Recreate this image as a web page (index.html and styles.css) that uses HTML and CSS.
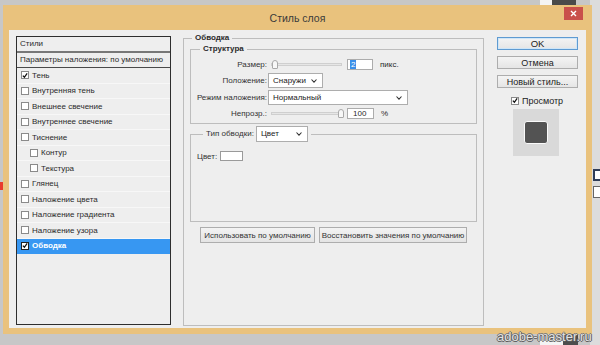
FILE: index.html
```html
<!DOCTYPE html>
<html lang="ru">
<head>
<meta charset="utf-8">
<title>Стиль слоя</title>
<link rel="stylesheet" href="styles.css">
</head>
<body>
<div class="desk">
  <div class="bg-right">
    <span class="bg-ico bg-ico-a"></span>
    <span class="bg-ico bg-ico-b"></span>
  </div>
  <div class="bg-top-white"></div>
  <div class="bg-top-dark"></div>
  <div class="bg-red"></div>
  <div class="bg-bot-white"></div>
  <div class="bg-bot-dark"></div>

  <div class="dialog">
    <div class="titlebar">
      <span class="title">Стиль слоя</span>
      <span class="close"><svg width="7" height="7" viewBox="0 0 7 7"><path d="M1 1L6 6M6 1L1 6" stroke="#fff" stroke-width="1.4"/></svg></span>
    </div>
    <div class="panel">
      <div class="stylelist">
        <div class="sl-head">Стили</div>
        <div class="sl-blend">Параметры наложения: по умолчанию</div>
        <div class="sl-item"><span class="cb"><svg width="7" height="7" viewBox="0 0 7 7"><path d="M1 3.6L2.8 5.6L6 1" fill="none" stroke="#111" stroke-width="1.5"/></svg></span>Тень</div>
        <div class="sl-item"><span class="cb"></span>Внутренняя тень</div>
        <div class="sl-item"><span class="cb"></span>Внешнее свечение</div>
        <div class="sl-item"><span class="cb"></span>Внутреннее свечение</div>
        <div class="sl-item"><span class="cb"></span>Тиснение</div>
        <div class="sl-item sub"><span class="cb"></span>Контур</div>
        <div class="sl-item sub"><span class="cb"></span>Текстура</div>
        <div class="sl-item"><span class="cb"></span>Глянец</div>
        <div class="sl-item"><span class="cb"></span>Наложение цвета</div>
        <div class="sl-item"><span class="cb"></span>Наложение градиента</div>
        <div class="sl-item"><span class="cb"></span>Наложение узора</div>
        <div class="sl-item sel"><span class="cb"><svg width="7" height="7" viewBox="0 0 7 7"><path d="M1 3.6L2.8 5.6L6 1" fill="none" stroke="#111" stroke-width="1.5"/></svg></span>Обводка</div>
      </div>

      <fieldset class="fs-main">
        <legend class="lg-main">Обводка</legend>
        <fieldset class="fs-struct">
          <legend class="lg-struct">Структура</legend>
          <div class="frow r1">
            <span class="flabel">Размер:</span>
            <span class="slider s1"><span class="thumb"></span></span>
            <span class="num n1"><span class="seltext">2</span></span>
            <span class="unit">пикс.</span>
          </div>
          <div class="frow r2">
            <span class="flabel">Положение:</span>
            <span class="dd dd-pos">Снаружи<svg class="chev" width="6" height="4" viewBox="0 0 6 4"><path d="M0.5 0.5L3 3.2L5.5 0.5" fill="none" stroke="#333" stroke-width="1.1"/></svg></span>
          </div>
          <div class="frow r3">
            <span class="flabel">Режим наложения:</span>
            <span class="dd dd-mode">Нормальный<svg class="chev" width="6" height="4" viewBox="0 0 6 4"><path d="M0.5 0.5L3 3.2L5.5 0.5" fill="none" stroke="#333" stroke-width="1.1"/></svg></span>
          </div>
          <div class="frow r4">
            <span class="flabel">Непрозр.:</span>
            <span class="slider s2"><span class="thumb thumb-end"></span></span>
            <span class="num n2">100</span>
            <span class="unit u2">%</span>
          </div>
        </fieldset>

        <fieldset class="fs-type">
          <legend class="lg-type"><span class="lg-type-text">Тип обводки:</span><span class="dd dd-type">Цвет<svg class="chev" width="6" height="4" viewBox="0 0 6 4"><path d="M0.5 0.5L3 3.2L5.5 0.5" fill="none" stroke="#333" stroke-width="1.1"/></svg></span></legend>
          <div class="color-row"><span>Цвет:</span><span class="swatch"></span></div>
        </fieldset>

        <div class="defaults">
          <span class="pbtn pb1">Использовать по умолчанию</span>
          <span class="pbtn pb2">Восстановить значения по умолчанию</span>
        </div>
      </fieldset>

      <div class="side">
        <span class="btn ok">OK</span>
        <span class="btn">Отмена</span>
        <span class="btn">Новый стиль...</span>
        <div class="pv-check"><span class="cb"><svg width="7" height="7" viewBox="0 0 7 7"><path d="M1 3.6L2.8 5.6L6 1" fill="none" stroke="#111" stroke-width="1.5"/></svg></span>Просмотр</div>
        <div class="preview"><div class="pv-square"></div></div>
      </div>
    </div>
  </div>

  <div class="watermark">adobe-master.ru</div>
</div>
</body>
</html>
```

FILE: styles.css
```css
html, body {
  margin: 0;
  padding: 0;
}
body {
  font-family: "Liberation Sans", Arial, sans-serif;
  color: #2a2a2a;
}
.desk {
  position: relative;
  width: 600px;
  height: 345px;
  overflow: hidden;
  background: #c7c7c7;
}

/* desktop bits around the dialog */
.bg-right {
  position: absolute;
  left: 590px;
  top: 0;
  width: 10px;
  height: 345px;
  background: #dcdcdc;
}
.bg-ico {
  position: absolute;
  left: 3px;
  width: 10px;
  height: 12px;
  background: #fff;
  box-sizing: border-box;
}
.bg-ico-a { top: 169px; border: 2px solid #2f3d58; }
.bg-ico-b { top: 186px; border: 1px solid #666; }
.bg-top-white { position: absolute; left: 540px; top: 0; width: 12px; height: 6px; background: #f4f4f4; }
.bg-top-dark { position: absolute; left: 552px; top: 0; width: 24px; height: 6px; background: #4a4a4a; }
.bg-red { position: absolute; left: 0; top: 182px; width: 3px; height: 8px; background: #e83a2e; }
.bg-bot-white { position: absolute; left: 540px; top: 334px; width: 23px; height: 11px; background: #f4f4f4; }
.bg-bot-dark { position: absolute; left: 563px; top: 334px; width: 15px; height: 11px; background: #4d4d4d; }

.watermark {
  position: absolute;
  left: 497px;
  top: 329px;
  font-size: 13px;
  line-height: 15px;
  color: #e2e2e2;
  text-shadow: 1px 0 0 #5a5a5a, -1px 0 0 #6a6a6a, 0 1px 0 #5a5a5a, 0 -1px 0 #7a7a7a;
}

/* dialog window */
.dialog {
  position: absolute;
  left: 3px;
  top: 5px;
  width: 589px;
  height: 329px;
  box-sizing: border-box;
  padding: 0 6px 6px 6px;
  background: #e9c27d;
  display: flex;
  flex-direction: column;
}
.titlebar {
  height: 25px;
  flex: none;
  position: relative;
  display: flex;
  align-items: center;
  justify-content: center;
}
.title {
  font-size: 10.5px;
  color: #3a3a3a;
  margin-top: 1px;
}
.close {
  position: absolute;
  right: 3px;
  top: 2px;
  width: 19px;
  height: 13px;
  background: #c9504b;
  display: flex;
  align-items: center;
  justify-content: center;
}
.close svg { display: block; }

.panel {
  flex: 1;
  display: flex;
  align-items: stretch;
  background: #eeeeee;
  padding: 0 8px 0 7px;
  font-size: 8px;
}

/* styles list */
.stylelist {
  width: 155px;
  flex: none;
  margin: 6px 0 3px 0;
  border: 1px solid #2e2e2e;
  box-sizing: border-box;
  background: #eeeeee;
}
.sl-head {
  height: 14px;
  line-height: 14px;
  padding-left: 3px;
  border-bottom: 2px solid #777;
}
.sl-blend {
  height: 14px;
  line-height: 14px;
  padding-left: 3px;
  border-bottom: 1px solid #4a4a4a;
}
.sl-item {
  height: 15.5px;
  box-sizing: border-box;
  border-bottom: 1px solid #f7f7f7;
  display: flex;
  align-items: center;
  padding-left: 4px;
  gap: 3px;
}
.sl-item.sub { padding-left: 13px; }
.sl-item.sel {
  background: #3797f2;
  color: #fff;
  font-weight: bold;
  border-bottom-color: #3797f2;
}
.cb {
  width: 8px;
  height: 8px;
  flex: none;
  box-sizing: border-box;
  border: 1px solid #8a8a8a;
  background: #fff;
  display: flex;
  align-items: center;
  justify-content: center;
}
.cb svg { display: block; }
.sel .cb { border-color: #222; }

/* middle fieldsets */
fieldset {
  margin: 0;
  min-width: 0;
  border: 1px solid #bdbdbd;
}
legend {
  padding: 0 3px;
  height: 10px;
  line-height: 10px;
  font-weight: bold;
}
.fs-main {
  width: 301px;
  flex: none;
  box-sizing: border-box;
  margin: 3px 0 2px 12px;
  padding: 1px 6px 0 6px;
}
.lg-main { margin-left: 2px; }
.fs-struct {
  padding: 3px 0 4px 0;
}
.lg-struct { margin-left: 9px; }

.frow {
  display: flex;
  align-items: center;
  height: 14px;
  margin-bottom: 2px;
}
.frow.r2, .frow.r3 { height: 15px; }
.frow.r4 { height: 12px; margin-bottom: 0; }
.flabel {
  width: 76px;
  flex: none;
  text-align: right;
  color: #333;
}
.slider {
  position: relative;
  height: 3px;
  margin-left: 4px;
  background: #e6e6e6;
  border: 1px solid #cfcfcf;
  box-sizing: border-box;
}
.s1 { width: 71px; }
.s2 { width: 73px; }
.thumb {
  position: absolute;
  left: 0;
  top: -4px;
  width: 6px;
  height: 9px;
  box-sizing: border-box;
  background: #f7f7f7;
  border: 1px solid #a9a9a9;
  border-radius: 3px 3px 1px 1px;
}
.thumb-end { left: auto; right: -1px; }
.num {
  height: 11px;
  box-sizing: border-box;
  border: 1px solid #acacac;
  background: #fff;
  display: flex;
  align-items: center;
  padding-left: 2px;
  font-size: 8px;
}
.n1 { width: 26px; margin-left: 5px; }
.n2 { width: 27px; margin-left: 3px; padding-left: 5px; }
.seltext {
  background: #3a8ee8;
  color: #fff;
  padding: 0 1px;
  line-height: 9px;
}
.unit { margin-left: 7px; }
.dd {
  position: relative;
  height: 15px;
  box-sizing: border-box;
  border: 1px solid #adadad;
  background: #fff;
  display: flex;
  align-items: center;
  padding-left: 4px;
  font-weight: normal;
  font-size: 8px;
  color: #222;
}
.chev { position: absolute; right: 5px; top: 5px; }
.dd-pos { width: 55px; margin-left: 1px; }
.dd-mode { width: 140px; margin-left: 1px; }

.fs-type {
  margin-top: 2px;
  padding: 9px 0 60px 6px;
}
.lg-type {
  margin-left: 6px;
  height: 16px;
  line-height: 16px;
  font-weight: normal;
  display: flex;
  align-items: center;
  gap: 2px;
  color: #333;
}
.dd-type { width: 52px; height: 16px; }
.color-row {
  display: flex;
  align-items: center;
  height: 10px;
  gap: 3px;
  color: #333;
}
.swatch {
  width: 23px;
  height: 10px;
  box-sizing: border-box;
  border: 1px solid #9a9a9a;
  background: #fff;
}

.defaults {
  display: flex;
  gap: 4px;
  margin: 5px 0 0 10px;
}
.pbtn {
  height: 16px;
  box-sizing: border-box;
  border: 1px solid #adadad;
  background: linear-gradient(#f3f3f3, #e4e4e4);
  display: flex;
  align-items: center;
  justify-content: center;
  color: #333;
}
.pb1 { width: 115px; }
.pb2 { width: 148px; }

/* right column */
.side {
  width: 81px;
  flex: none;
  margin: 7px 0 0 13px;
  display: flex;
  flex-direction: column;
  font-size: 9px;
}
.btn {
  height: 13px;
  box-sizing: border-box;
  border: 1px solid #adadad;
  background: linear-gradient(#f4f4f4, #e5e5e5);
  display: flex;
  align-items: center;
  justify-content: center;
  margin-bottom: 6px;
  color: #222;
}
.btn.ok {
  border-color: #5f9bd1;
  box-shadow: inset 0 0 0 1px #cfe6f8;
  font-size: 9.5px;
}
.pv-check {
  display: flex;
  align-items: center;
  gap: 3px;
  height: 9px;
  margin: 2px 0 0 14px;
  font-size: 9px;
  color: #222;
}
.preview {
  width: 46px;
  height: 47px;
  margin: 4px 0 0 16px;
  background: #d9d9d9;
  display: flex;
  align-items: center;
  justify-content: center;
}
.pv-square {
  width: 24px;
  height: 23px;
  box-sizing: border-box;
  border: 1.5px solid #fafafa;
  border-radius: 3px;
  background: #535353;
}
```
